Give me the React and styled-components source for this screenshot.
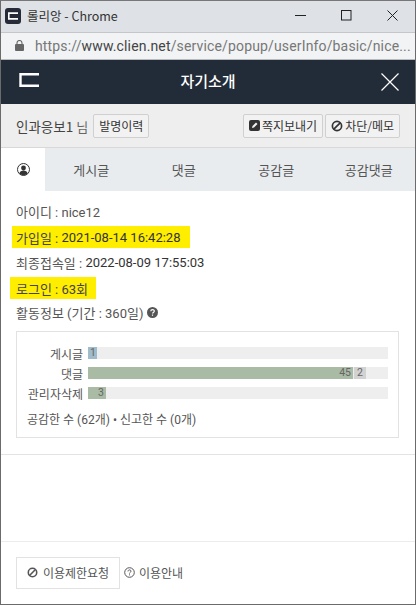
import styled, { createGlobalStyle } from "styled-components"

const GlobalStyle = createGlobalStyle`
    html, body {
        margin: 0;
        padding: 0;
        background: #fff;
    }
    body {
        font-family: Roboto, "Noto Sans CJK KR", sans-serif;
        color: #444;
    }
`

const Win = styled.div`
    width: 416px;
    height: 605px;
    box-sizing: border-box;
    border: 1px solid #6b6b6b;
    border-top-color: #777;
    display: flex;
    flex-direction: column;
    background: #fff;
    overflow: hidden;
`

const TitleBar = styled.div`
    height: 31px;
    flex: none;
    box-sizing: border-box;
    background: #dee1e6;
    display: flex;
    align-items: center;
    padding: 0 0 2px 4px;
`

const AppIcon = styled.div`
    width: 16px;
    height: 16px;
    border-radius: 3px;
    background: #252b38;
    display: flex;
    align-items: center;
    justify-content: center;
`

const WinTitle = styled.div`
    margin-left: 6px;
    font-size: 12.5px;
    font-family: "Noto Sans CJK KR", sans-serif;
    color: #333;
    flex: 1;
`

const WinBtn = styled.div`
    width: 46px;
    display: flex;
    justify-content: center;
    color: #222;
`

const AddressBar = styled.div`
    height: 28px;
    flex: none;
    box-sizing: border-box;
    background: #f1f3f4;
    border-top: 1px solid #c4c6c9;
    border-bottom: 1px solid #b9babc;
    display: flex;
    align-items: center;
    padding: 0 0 1px 14px;
    font-size: 14px;
    letter-spacing: 0.15px;
    color: #777;
    white-space: nowrap;
`

const Url = styled.span`
    margin-left: 11px;
    b {
        font-weight: 400;
        color: #444;
    }
`

const Header = styled.div`
    height: 44px;
    flex: none;
    background: #222b38;
    display: flex;
    align-items: center;
    justify-content: space-between;
    padding: 0 12px 0 18px;
    color: #fff;
`

const HeaderLogo = styled.div`
    display: flex;
    margin-top: -4px;
`

const HeaderTitle = styled.div`
    font-size: 15px;
    font-weight: 500;
    font-family: "Noto Sans CJK KR", sans-serif;
    padding-bottom: 4px;
`

const UserRow = styled.div`
    height: 44px;
    flex: none;
    box-sizing: border-box;
    background: #eeeeee;
    border-bottom: 1px solid #d8d8d8;
    display: flex;
    align-items: center;
    padding: 0 15px;
    font-family: "Noto Sans CJK KR", sans-serif;
`

const Nick = styled.div`
    font-size: 13.5px;
    color: #444;
    span {
        color: #666;
        font-size: 13px;
    }
`

const Spacer = styled.div`
    flex: 1;
`

const SmallBtn = styled.div`
    height: 24px;
    box-sizing: border-box;
    padding: 0 5px;
    background: #f2f2f2;
    border: 1px solid #d0d0d0;
    border-radius: 2px;
    display: flex;
    align-items: center;
    gap: 2px;
    font-size: 12px;
    color: #333;
    margin-left: ${(p) => p.$gap || 2}px;
    white-space: nowrap;
`

const Tabs = styled.div`
    height: 43px;
    flex: none;
    display: flex;
    background: #e9ecef;
    font-family: "Noto Sans CJK KR", sans-serif;
`

const ProfileTab = styled.div`
    width: 44px;
    background: #fff;
    display: flex;
    align-items: center;
    justify-content: center;
`

const Tab = styled.div`
    flex: 1;
    display: flex;
    align-items: center;
    justify-content: center;
    font-size: 13px;
    color: #555;
`

const Info = styled.div`
    padding: 8px 15px 0;
    font-size: 13px;
    color: #555;
`

const InfoRow = styled.div`
    height: 25px;
    margin-top: ${(p) => p.$top || 0}px;
    display: flex;
    align-items: center;
    white-space: pre;
    b {
        font-weight: 400;
        color: #333;
    }
    svg {
        margin-left: 4px;
    }
`

const Marked = styled(InfoRow)`
    width: ${(p) => p.$w}px;
    height: 22px;
    margin: ${(p) => p.$m};
    padding-left: ${(p) => p.$pad}px;
    background: #ffee00;
    color: #444;
    box-sizing: border-box;
`

const StatBox = styled.div`
    margin: 6px 0 0;
    height: 107px;
    width: 383px;
    box-sizing: border-box;
    border: 1px solid #e2e2e2;
    padding: 15px 10px 0 0;
`

const BarRow = styled.div`
    display: flex;
    align-items: center;
    height: 12px;
    margin-bottom: 8px;
`

const BarLabel = styled.div`
    width: 66px;
    flex: none;
    text-align: right;
    font-size: 12px;
    color: #555;
    font-family: "Noto Sans CJK KR", sans-serif;
    white-space: nowrap;
`

const Track = styled.div`
    margin-left: 5px;
    width: 301px;
    height: 12px;
    background: #eeeeee;
    display: flex;
    font-size: 10.5px;
    color: #666;
`

const Seg = styled.div`
    width: ${(p) => p.$w}px;
    background: ${(p) => p.$color};
    margin-right: 1px;
    text-align: ${(p) => p.$align || "right"};
    padding: 0 2px;
    box-sizing: border-box;
    line-height: 12px;
`

const Summary = styled.div`
    margin: 11px 0 0 10px;
    font-size: 12px;
    color: #555;
    white-space: nowrap;
`

const Divider = styled.div`
    margin-top: 16px;
    border-top: 1px solid #e4e4e4;
    flex: 1;
`

const Footer = styled.div`
    height: 63px;
    flex: none;
    box-sizing: border-box;
    border-top: 1px solid #ececec;
    display: flex;
    align-items: flex-start;
    padding: 15px 15px 0;
    font-family: "Noto Sans CJK KR", sans-serif;
`

const OutlineBtn = styled.div`
    width: 104px;
    height: 32px;
    box-sizing: border-box;
    border: 1px solid #e2e2e2;
    padding-bottom: 1px;
    display: flex;
    align-items: center;
    justify-content: center;
    gap: 5px;
    font-size: 12px;
    color: #555;
`

const HelpLink = styled.div`
    height: 32px;
    box-sizing: border-box;
    padding-bottom: 1px;
    margin-left: 4px;
    display: flex;
    align-items: center;
    gap: 4px;
    font-size: 12px;
    color: #555;
`

const Ban = ({ size = 12, color = "#333" }) => (
    <svg width={size} height={size} viewBox="0 0 12 12" fill="none" stroke={color} strokeWidth="1.7">
        <circle cx="6" cy="6" r="4.6" />
        <path d="M2.8 9.2 9.2 2.8" />
    </svg>
)

const ClienMark = ({ w, h, sw }) => (
    <svg width={w} height={h} viewBox="0 0 20 14" fill="none" stroke="#fff" strokeWidth={sw}>
        <path d="M20 1.2H1.500v11.600H20" />
    </svg>
)

export default function App() {
    return (
        <Win>
            <GlobalStyle />
            <TitleBar>
                <AppIcon>
                    <ClienMark w={10} h={8} sw={3.4} />
                </AppIcon>
                <WinTitle>롤리앙 - Chrome</WinTitle>
                <WinBtn>
                    <svg width="11" height="11" viewBox="0 0 11 11" stroke="#222" strokeWidth="1"><path d="M0 5.5h11" /></svg>
                </WinBtn>
                <WinBtn>
                    <svg width="11" height="11" viewBox="0 0 11 11" fill="none" stroke="#222" strokeWidth="1"><rect x=".5" y=".5" width="9.5" height="9.5" /></svg>
                </WinBtn>
                <WinBtn>
                    <svg width="11" height="11" viewBox="0 0 11 11" stroke="#222" strokeWidth="1"><path d="M.5.5l10 10M10.5.5l-10 10" /></svg>
                </WinBtn>
            </TitleBar>
            <AddressBar>
                <svg width="9" height="11" viewBox="0 0 9 11" fill="#666">
                    <rect y="4" width="9" height="7" rx="1" />
                    <path d="M2 4.5V3a2.5 2.5 0 0 1 5 0v1.500" fill="none" stroke="#666" strokeWidth="1.1" />
                </svg>
                <Url>https://<b>www.clien.net</b>/service/popup/userInfo/basic/nice...</Url>
            </AddressBar>
            <Header>
                <HeaderLogo>
                    <ClienMark w={20} h={14} sw={2.4} />
                </HeaderLogo>
                <HeaderTitle>자기소개</HeaderTitle>
                <svg width="26" height="26" viewBox="0 0 26 26" stroke="#fff" strokeWidth="1.2"><path d="M4.500 4.500l17 17M21.500 4.500l-17 17" /></svg>
            </Header>
            <UserRow>
                <Nick>인과응보1 <span>님</span></Nick>
                <SmallBtn $gap={5}>발명이력</SmallBtn>
                <Spacer />
                <SmallBtn>
                    <svg width="11" height="11" viewBox="0 0 11 11">
                        <rect width="11" height="11" rx="2" fill="#333" />
                        <path d="M3 8l.5-2L7 2.500 8.500 4 5 7.500z" fill="#f2f2f2" />
                    </svg>
                    쪽지보내기
                </SmallBtn>
                <SmallBtn><Ban />차단/메모</SmallBtn>
            </UserRow>
            <Tabs>
                <ProfileTab>
                    <svg width="13" height="13" viewBox="0 0 13 13">
                        <circle cx="6.500" cy="6.500" r="6" fill="#fff" stroke="#333" strokeWidth="1" />
                        <circle cx="6.500" cy="5" r="2.400" fill="#333" />
                        <path d="M2.300 10.500c.6-2.200 2.300-2.900 4.200-2.900s3.600.7 4.200 2.900a6 6 0 0 1-8.400 0z" fill="#333" />
                    </svg>
                </ProfileTab>
                <Tab>게시글</Tab>
                <Tab>댓글</Tab>
                <Tab>공감글</Tab>
                <Tab>공감댓글</Tab>
            </Tabs>
            <Info>
                <InfoRow>아이디 : nice12</InfoRow>
                <Marked $w={178} $m="2px 0 0 -4px" $pad={4}>가입일 : <b>2021-08-14 16:42:28</b></Marked>
                <InfoRow $top={2}>최종접속일 : <b>2022-08-09 17:55:03</b></InfoRow>
                <Marked $w={86} $m="2px 0 0 -6px" $pad={6}>로그인 : 63회</Marked>
                <InfoRow $top={1}>
                    활동정보 (기간 : 360일)
                    <svg width="11" height="11" viewBox="0 0 11 11">
                        <circle cx="5.500" cy="5.500" r="5.500" fill="#555" />
                        <path d="M3.800 4.200c0-2.200 3.500-2.200 3.500-.1 0 1.300-1.800 1.300-1.800 2.500" fill="none" stroke="#fff" strokeWidth="1.200" />
                        <rect x="4.900" y="7.500" width="1.200" height="1.300" fill="#fff" />
                    </svg>
                </InfoRow>
                <StatBox>
                    <BarRow>
                        <BarLabel>게시글</BarLabel>
                        <Track><Seg $w={9} $color="#a0bccb" $align="center">1</Seg></Track>
                    </BarRow>
                    <BarRow>
                        <BarLabel>댓글</BarLabel>
                        <Track>
                            <Seg $w={265} $color="#a9baa5">45</Seg>
                            <Seg $w={12} $color="#d2d2d2" $align="center">2</Seg>
                        </Track>
                    </BarRow>
                    <BarRow>
                        <BarLabel>관리자삭제</BarLabel>
                        <Track><Seg $w={18} $color="#a9baa5">3</Seg></Track>
                    </BarRow>
                    <Summary>공감한 수 (62개) • 신고한 수 (0개)</Summary>
                </StatBox>
            </Info>
            <Divider />
            <Footer>
                <OutlineBtn><Ban size={11} color="#555" />이용제한요청</OutlineBtn>
                <HelpLink>
                    <svg width="11" height="11" viewBox="0 0 11 11" fill="none" stroke="#555" strokeWidth="1">
                        <circle cx="5.500" cy="5.500" r="4.800" />
                        <path d="M4 4.400c0-2 3-1.900 3-.2 0 1.100-1.500 1.100-1.500 2.300M5.500 7.400v1" />
                    </svg>
                    이용안내
                </HelpLink>
            </Footer>
        </Win>
    )
}
